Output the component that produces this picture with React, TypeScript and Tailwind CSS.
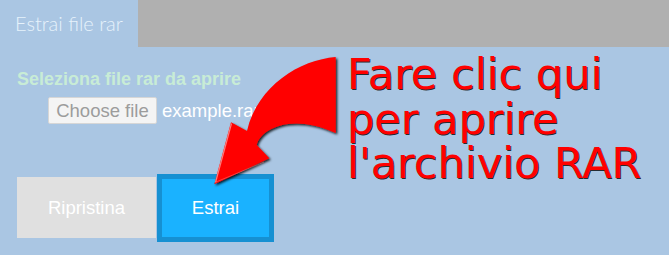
import React from 'react';

// Curved red arrow pointing from the callout down to the "Estrai" button
function CalloutArrow() {
  return (
    <svg
      className="pointer-events-none absolute inset-0"
      width={669}
      height={255}
      viewBox="0 0 669 255"
    >
      <defs>
        <filter id="arrowShadow" x="-20%" y="-20%" width="140%" height="140%">
          <feDropShadow dx="1.5" dy="1.5" stdDeviation="1" floodColor="#000" floodOpacity="0.85" />
        </filter>
      </defs>
      <path
        d="M335.7 57 C300 60 258 85 247 131 L231 122.3 L214.3 184.3 L269.3 158.3 L256.7 145 C260 130 290 112 335.7 133 Z"
        fill="#ff0000"
        filter="url(#arrowShadow)"
      />
      <path
        d="M231.5 123.5 L215.5 182.5"
        stroke="#ff9a9a"
        strokeWidth="1.2"
        strokeOpacity="0.8"
        fill="none"
      />
      <path d="M216 182 L264 162" stroke="#ff8080" strokeWidth="0.8" strokeOpacity="0.6" fill="none" />
    </svg>
  );
}

export default function App() {
  return (
    <div className="relative h-[255px] w-[669px] overflow-hidden bg-[#aac6e3] font-['Liberation_Sans',Arial,sans-serif]">
      {/* Tab bar */}
      <div className="flex h-[47px]">
        <div className="flex w-[138px] items-center pl-[15px] pb-[2px] font-['Lato','Open_Sans',sans-serif] text-[20px] font-light text-[#e6f2fb]">
          Estrai file rar
        </div>
        <div className="flex-1 bg-[#b0b0b0]" />
      </div>

      <div className="flex">
        {/* Form */}
        <div className="w-[347px] flex-none pl-[17px]">
          <div className="mt-[23px] text-[18px] font-bold leading-none text-[#c8ecd6]">
            Seleziona file rar da aprire
          </div>
          <div className="mt-[9px] ml-[31px] flex items-center">
            <div className="flex h-[27px] w-[109px] items-center justify-center rounded-[2px] border border-[#d6d6d6] bg-[#f4f4f4] text-[18.5px] text-[#9c9c9c]">
              Choose file
            </div>
            <span className="ml-[5px] text-[18.5px] text-white">example.rar</span>
          </div>
          <div className="mt-[49px] flex items-center">
            <button className="h-[61px] w-[139px] bg-[#e0e0e0] text-[18.5px] text-white">
              Ripristina
            </button>
            <button className="ml-[1px] h-[68px] w-[117px] border-[5px] border-[#1690d2] bg-[#1ab2ff] text-[18.5px] text-white">
              Estrai
            </button>
          </div>
        </div>

        {/* Callout text */}
        <div className="pt-[5px] font-['DejaVu_Sans',sans-serif] text-[43px] leading-[44.5px] text-[#ff0000] [text-shadow:1px_1px_0.5px_rgba(0,0,0,0.8)]">
          <div>Fare clic qui</div>
          <div>per aprire</div>
          <div>l'archivio RAR</div>
        </div>
      </div>

      <CalloutArrow />
    </div>
  );
}
